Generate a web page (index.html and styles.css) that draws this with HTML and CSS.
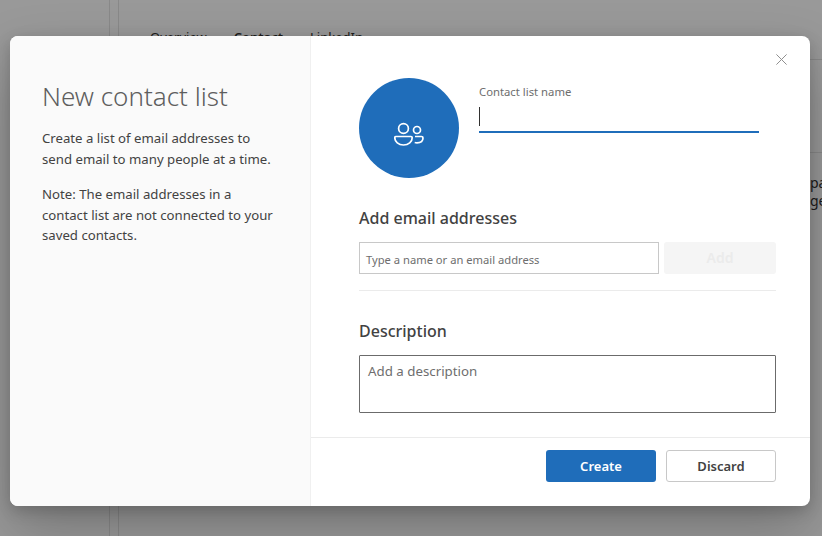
FILE: index.html
```html
<!DOCTYPE html>
<html lang="en">
<head>
<meta charset="utf-8">
<title>New contact list</title>
<link rel="stylesheet" href="styles.css">
</head>
<body>
<div class="page">
  <div class="rail"></div>
  <div class="content">
    <nav class="tabs"><span>Overview</span><span class="tab-active">Contact</span><span>LinkedIn</span></nav>
    <div class="band"></div>
    <div class="peek">pa<br>ge</div>
  </div>
</div>
<div class="scrim"></div>
<section class="modal">
  <aside class="intro">
    <h1>New contact list</h1>
    <p>Create a list of email addresses to send email to many people at a time.</p>
    <p>Note: The email addresses in a contact list are not connected to your saved contacts.</p>
  </aside>
  <div class="main">
    <button class="close" aria-label="Close">
      <svg width="11" height="11" viewBox="0 0 11 11"><path d="M.4.4l10.200 10.200M10.600.4L.4 10.600" stroke="#8f8f8f" fill="none"/></svg>
    </button>
    <div class="form">
      <div class="identity">
        <div class="avatar">
          <svg width="30" height="24" viewBox="0 0 30 24" fill="none" stroke="#fff" stroke-width="1.700">
            <circle cx="9.500" cy="6.500" r="4.900"/>
            <path d="M2 14.500h15a1.200 1.200 0 0 1 1.200 1.200c0 4.200-3.700 7.300-8.700 7.300S.8 19.900.8 15.700A1.200 1.200 0 0 1 2 14.500z"/>
            <circle cx="23" cy="8" r="3.500"/>
            <path d="M21 14.500h6.500a1.500 1.500 0 0 1 1.500 1.500c0 3-2.500 4.800-6 4.800-.8 0-1.500-.1-2.300-.3"/>
          </svg>
        </div>
        <label class="name-field">
          <span class="name-label">Contact list name</span>
          <span class="name-input"><span class="caret"></span></span>
        </label>
      </div>
      <h2 class="heading-add">Add email addresses</h2>
      <div class="add-row">
        <div class="email-input">Type a name or an email address</div>
        <button class="add-btn">Add</button>
      </div>
      <hr class="rule">
      <h2 class="heading-desc">Description</h2>
      <div class="desc-input">Add a description</div>
    </div>
    <footer class="actions">
      <button class="btn btn-primary">Create</button>
      <button class="btn btn-secondary">Discard</button>
    </footer>
  </div>
</section>
</body>
</html>
```
FILE: styles.css
```css
* { box-sizing: border-box; }
html, body { margin: 0; height: 100%; overflow: hidden; }
body { font-family: "Noto Sans", "Open Sans", sans-serif; background: #fff; color: #323130; }

.page { display: flex; height: 536px; }
.rail { width: 119px; border-right: 1px solid #e4e4e4; position: relative; flex: none; }
.rail::after { content: ""; position: absolute; left: 109px; top: 0; bottom: 0; width: 1px; background: #e4e4e4; }
.content { flex: 1; min-width: 0; padding-top: 27px; }
.tabs { display: flex; gap: 27px; height: 33px; padding-left: 31px; border-bottom: 1px solid #e4e4e4; font-size: 13px; line-height: 20px; }
.tab-active { font-weight: 600; }
.band { height: 93px; border-bottom: 1px solid #e4e4e4; }
.peek { margin-left: auto; width: 12px; padding-top: 21px; font-size: 14px; line-height: 18px; overflow: hidden; }

.scrim { position: absolute; inset: 0; background: rgba(0,0,0,.4); }

.modal { position: absolute; left: 10px; top: 36px; width: 800px; height: 470px; display: flex; background: #fff; border-radius: 8px; box-shadow: 0 25.600px 57.600px rgba(0,0,0,.22), 0 4.800px 14.400px rgba(0,0,0,.18); overflow: hidden; }
.intro { width: 301px; flex: none; background: #fafafa; border-right: 1px solid #f0f0f0; padding: 41px 33px 0 32px; font-size: 13.200px; line-height: 20.500px; color: #424242; }
.intro h1 { margin: 0 0 13px; font-size: 26px; line-height: 38px; font-weight: 300; color: #5e5e5e; white-space: nowrap; }
.intro p { margin: 0 0 15px; }

.main { flex: 1; display: flex; flex-direction: column; position: relative; min-width: 0; }
.close { position: absolute; right: 23px; top: 18px; width: 11px; height: 11px; padding: 0; border: 0; background: none; display: flex; }
.form { flex: 1; padding: 42px 34px 0 48px; }
.identity { display: flex; gap: 20px; }
.avatar { width: 100px; height: 100px; border-radius: 50%; background: #1f6dba; display: flex; align-items: center; justify-content: center; padding-top: 12px; flex: none; }
.name-field { flex: 1; max-width: 280px; display: flex; flex-direction: column; padding-top: 6px; }
.name-label { font-size: 11.300px; line-height: 16px; color: #6e6e6e; }
.name-input { height: 29px; margin-top: 4px; border-bottom: 2px solid #1f6dba; padding-top: 3px; }
.caret { display: block; width: 1px; height: 19px; background: #323130; }

h2 { margin: 0; font-size: 16px; line-height: 24px; font-weight: 500; color: #424242; }
.heading-add { margin-top: 28px; }
.add-row { display: flex; gap: 5px; margin-top: 12px; }
.email-input { width: 300px; height: 32px; border: 1px solid #c8c8c8; padding: 0 6px; font-size: 11.200px; line-height: 33px; color: #6e6e6e; }
.add-btn { width: 112px; height: 32px; border: 0; border-radius: 3px; background: #f5f5f5; color: #ebebeb; font: 600 14px/20px "Noto Sans", sans-serif; padding: 0; }
.rule { margin: 16px 0 0; border: 0; border-top: 1px solid #ebebeb; }
.heading-desc { margin-top: 28px; }
.desc-input { height: 58px; margin-top: 12px; border: 1px solid #6b6b6b; border-radius: 1px; padding: 5px 8px; font-size: 13.300px; line-height: 20px; color: #6e6e6e; }

.actions { height: 69px; border-top: 1px solid #ebebeb; display: flex; justify-content: flex-end; gap: 10px; padding: 12px 34px 0 0; flex: none; }
.btn { width: 110px; height: 32px; border-radius: 3px; font: 600 13px/20px "Noto Sans", sans-serif; padding: 0; }
.btn-primary { background: #1f6dba; border: 0; color: #fff; }
.btn-secondary { background: #fff; border: 1px solid #c8c8c8; color: #424242; }
```
